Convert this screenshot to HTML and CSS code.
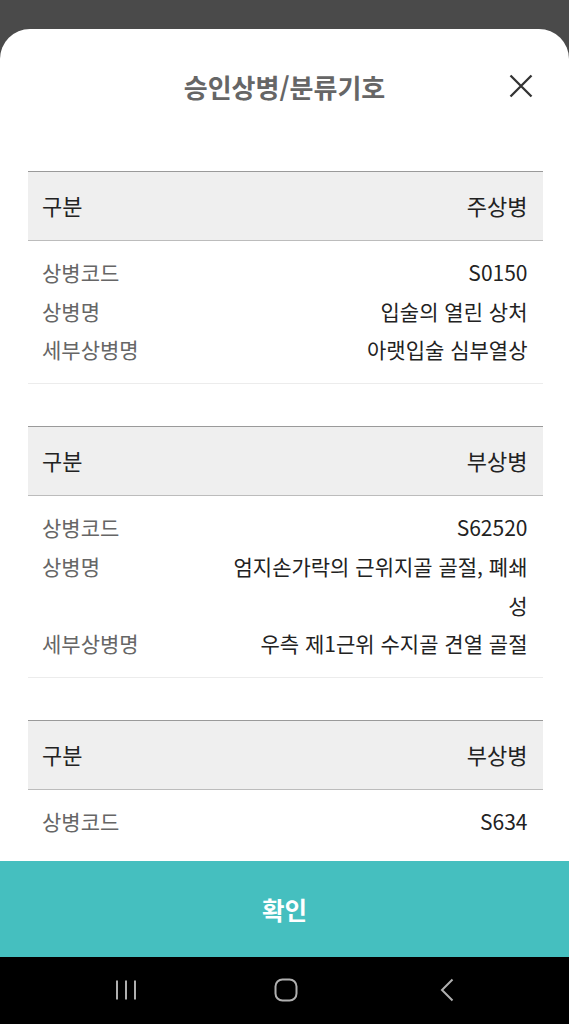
FILE: index.html
```html
<!DOCTYPE html>
<html lang="ko">
<head>
<meta charset="utf-8">
<title>승인상병/분류기호</title>
<link rel="stylesheet" href="styles.css">
</head>
<body>
<div class="screen">
  <div class="dim"></div>
  <div class="sheet">
    <header class="sheet-head">
      <h1 class="title">승인상병/분류기호</h1>
      <button class="close" aria-label="닫기">
        <svg width="24" height="24" viewBox="0 0 24 24"><path d="M1.5 1.5 L22.5 22.5 M22.5 1.5 L1.5 22.5" stroke="#333" stroke-width="2.3" fill="none"/></svg>
      </button>
    </header>
    <div class="scroll">
      <section class="table">
        <div class="thead"><span>구분</span><span>주상병</span></div>
        <div class="tbody">
          <div class="row"><span class="label">상병코드</span><span class="value">S0150</span></div>
          <div class="row"><span class="label">상병명</span><span class="value">입술의 열린 상처</span></div>
          <div class="row"><span class="label">세부상병명</span><span class="value">아랫입술 심부열상</span></div>
        </div>
      </section>
      <section class="table">
        <div class="thead"><span>구분</span><span>부상병</span></div>
        <div class="tbody">
          <div class="row"><span class="label">상병코드</span><span class="value">S62520</span></div>
          <div class="row"><span class="label">상병명</span><span class="value">엄지손가락의 근위지골 골절, 폐쇄성</span></div>
          <div class="row"><span class="label">세부상병명</span><span class="value">우측 제1근위 수지골 견열 골절</span></div>
        </div>
      </section>
      <section class="table table-last">
        <div class="thead"><span>구분</span><span>부상병</span></div>
        <div class="tbody">
          <div class="row"><span class="label">상병코드</span><span class="value">S634</span></div>
        </div>
      </section>
    </div>
    <button class="confirm">확인</button>
  </div>
  <nav class="navbar">
    <svg class="nav-icon" width="24" height="24" viewBox="0 0 24 24"><path d="M3 2.5 V21.5 M12 2.5 V21.5 M21 2.5 V21.5" stroke="#b0b0b0" stroke-width="2" fill="none"/></svg>
    <svg class="nav-icon" width="24" height="24" viewBox="0 0 24 24"><rect x="1.5" y="1.5" width="21" height="21" rx="7" stroke="#b0b0b0" stroke-width="2" fill="none"/></svg>
    <svg class="nav-icon" width="24" height="24" viewBox="0 0 24 24"><path d="M18.5 1.5 L8 12 L18.5 22.5" stroke="#b0b0b0" stroke-width="2" fill="none"/></svg>
  </nav>
</div>
</body>
</html>
```

FILE: styles.css
```css
* { box-sizing: border-box; }
html, body {
  margin: 0;
  padding: 0;
  background: #4a4a4a;
}
body {
  font-family: "Noto Sans CJK KR", "Noto Sans", sans-serif;
  color: #222;
}
.screen {
  width: 569px;
  height: 1024px;
  display: flex;
  flex-direction: column;
  overflow: hidden;
}
.dim {
  height: 29px;
  flex: none;
  background: #4a4a4a;
}
.sheet {
  flex: 1;
  min-height: 0;
  display: flex;
  flex-direction: column;
  background: #fff;
  border-radius: 30px 30px 0 0;
  overflow: hidden;
}
.sheet-head {
  position: relative;
  height: 116px;
  flex: none;
  display: flex;
  align-items: center;
  justify-content: center;
}
.title {
  margin: 0;
  font-size: 26px;
  font-weight: 700;
  color: #666;
  line-height: 1;
}
.close {
  position: absolute;
  right: 36px;
  top: 45px;
  width: 24px;
  height: 24px;
  padding: 0;
  border: 0;
  background: none;
  display: flex;
}
.scroll {
  flex: 1;
  min-height: 0;
  overflow: hidden;
  padding: 26px 26.5px 0 28px;
  display: flex;
  flex-direction: column;
  gap: 42px;
}
.table {
  flex: none;
  border-bottom: 1px solid #ececec;
}
.table-last {
  border-bottom: 0;
}
.thead {
  height: 70px;
  display: flex;
  align-items: center;
  justify-content: space-between;
  padding: 0 15px 2px 14px;
  background: #efefef;
  border-top: 1.5px solid #9a9a9a;
  border-bottom: 1.5px solid #bcbcbc;
  font-size: 22px;
  color: #222;
}
.tbody {
  padding: 12px 15px 14px 14px;
}
.row {
  display: flex;
  justify-content: space-between;
  gap: 24px;
  font-size: 21px;
  line-height: 38.7px;
}
.label {
  flex: none;
  color: #666;
}
.value {
  color: #222;
  text-align: right;
  max-width: 300px;
}
.confirm {
  flex: none;
  height: 96px;
  border: 0;
  margin: 0;
  padding: 0;
  background: #45bfbf;
  color: #fff;
  font-family: "Noto Sans CJK KR", "Noto Sans", sans-serif;
  font-size: 24.5px;
  font-weight: 700;
  width: 100%;
}
.navbar {
  height: 67px;
  flex: none;
  background: #000;
  display: flex;
  align-items: center;
  justify-content: flex-start;
  gap: 136px;
  padding: 0 0 2px 114px;
}
.nav-icon {
  display: block;
}
```
